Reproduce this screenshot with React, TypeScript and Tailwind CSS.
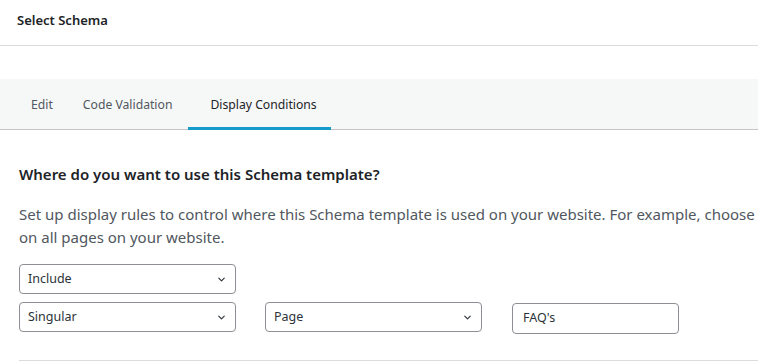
import { ChevronDown } from "lucide-react";

function SelectBox({ label }: { label: string }) {
    return (
        <div className="w-[217px] h-[30px] flex items-center justify-between border border-[#8c8f94] rounded-[4px] pl-[8px] pr-[8px] text-[12.5px] text-[#2c3338] bg-white">
            <span>{label}</span>
            <ChevronDown className="w-[11px] h-[11px] text-[#2c3338]" strokeWidth={2.5} />
        </div>
    );
}

export default function App() {
    return (
        <div className="w-full h-[364px] overflow-hidden bg-white [font-family:'Noto_Sans',sans-serif]">
            <div className="h-[46px] border-b border-[#dcdcde] flex items-center pl-[17px]">
                <h1 className="text-[13px] font-semibold text-[#1d2327] -mt-[4px]">Select Schema</h1>
            </div>

            <div className="h-[33px]" />

            <div className="h-[51px] pt-[3px] bg-[#f6f7f7] border-b border-[#c3c4c7] flex items-stretch text-[12.2px] text-[#50575e]">
                <div className="pl-[31px] flex items-center">Edit</div>
                <div className="pl-[30px] flex items-center">Code Validation</div>
                <div className="ml-[16px] w-[143px] pl-[22px] flex items-center relative text-[#1d2327]">
                    Display Conditions
                    <span className="absolute left-0 right-0 -bottom-[1px] h-[3px] bg-[#149bc9]" />
                </div>
            </div>

            <div className="pl-[19px] w-[1000px]">
                <h2 className="mt-[33px] text-[15px] font-semibold text-[#1d2327] leading-[22px]">
                    Where do you want to use this Schema template?
                </h2>
                <p className="mt-[18px] text-[15px] leading-[23px] text-[#50575e]">
                    Set up display rules to control where this Schema template is used on your website. For example, choose to use it
                    <br />
                    on all pages on your website.
                </p>

                <div className="mt-[15px] flex flex-col gap-[8px]">
                    <SelectBox label="Include" />
                    <div className="flex items-start">
                        <SelectBox label="Singular" />
                        <div className="ml-[29px]">
                            <SelectBox label="Page" />
                        </div>
                        <div className="ml-[30px] w-[167px] h-[31px] mt-[1px] border border-[#8c8f94] rounded-[4px] flex items-center pl-[10px] text-[12.5px] text-[#2c3338]">
                            FAQ's
                        </div>
                    </div>
                </div>

                <div className="mt-[26px] border-t border-[#dcdcde]" />
            </div>
        </div>
    );
}
